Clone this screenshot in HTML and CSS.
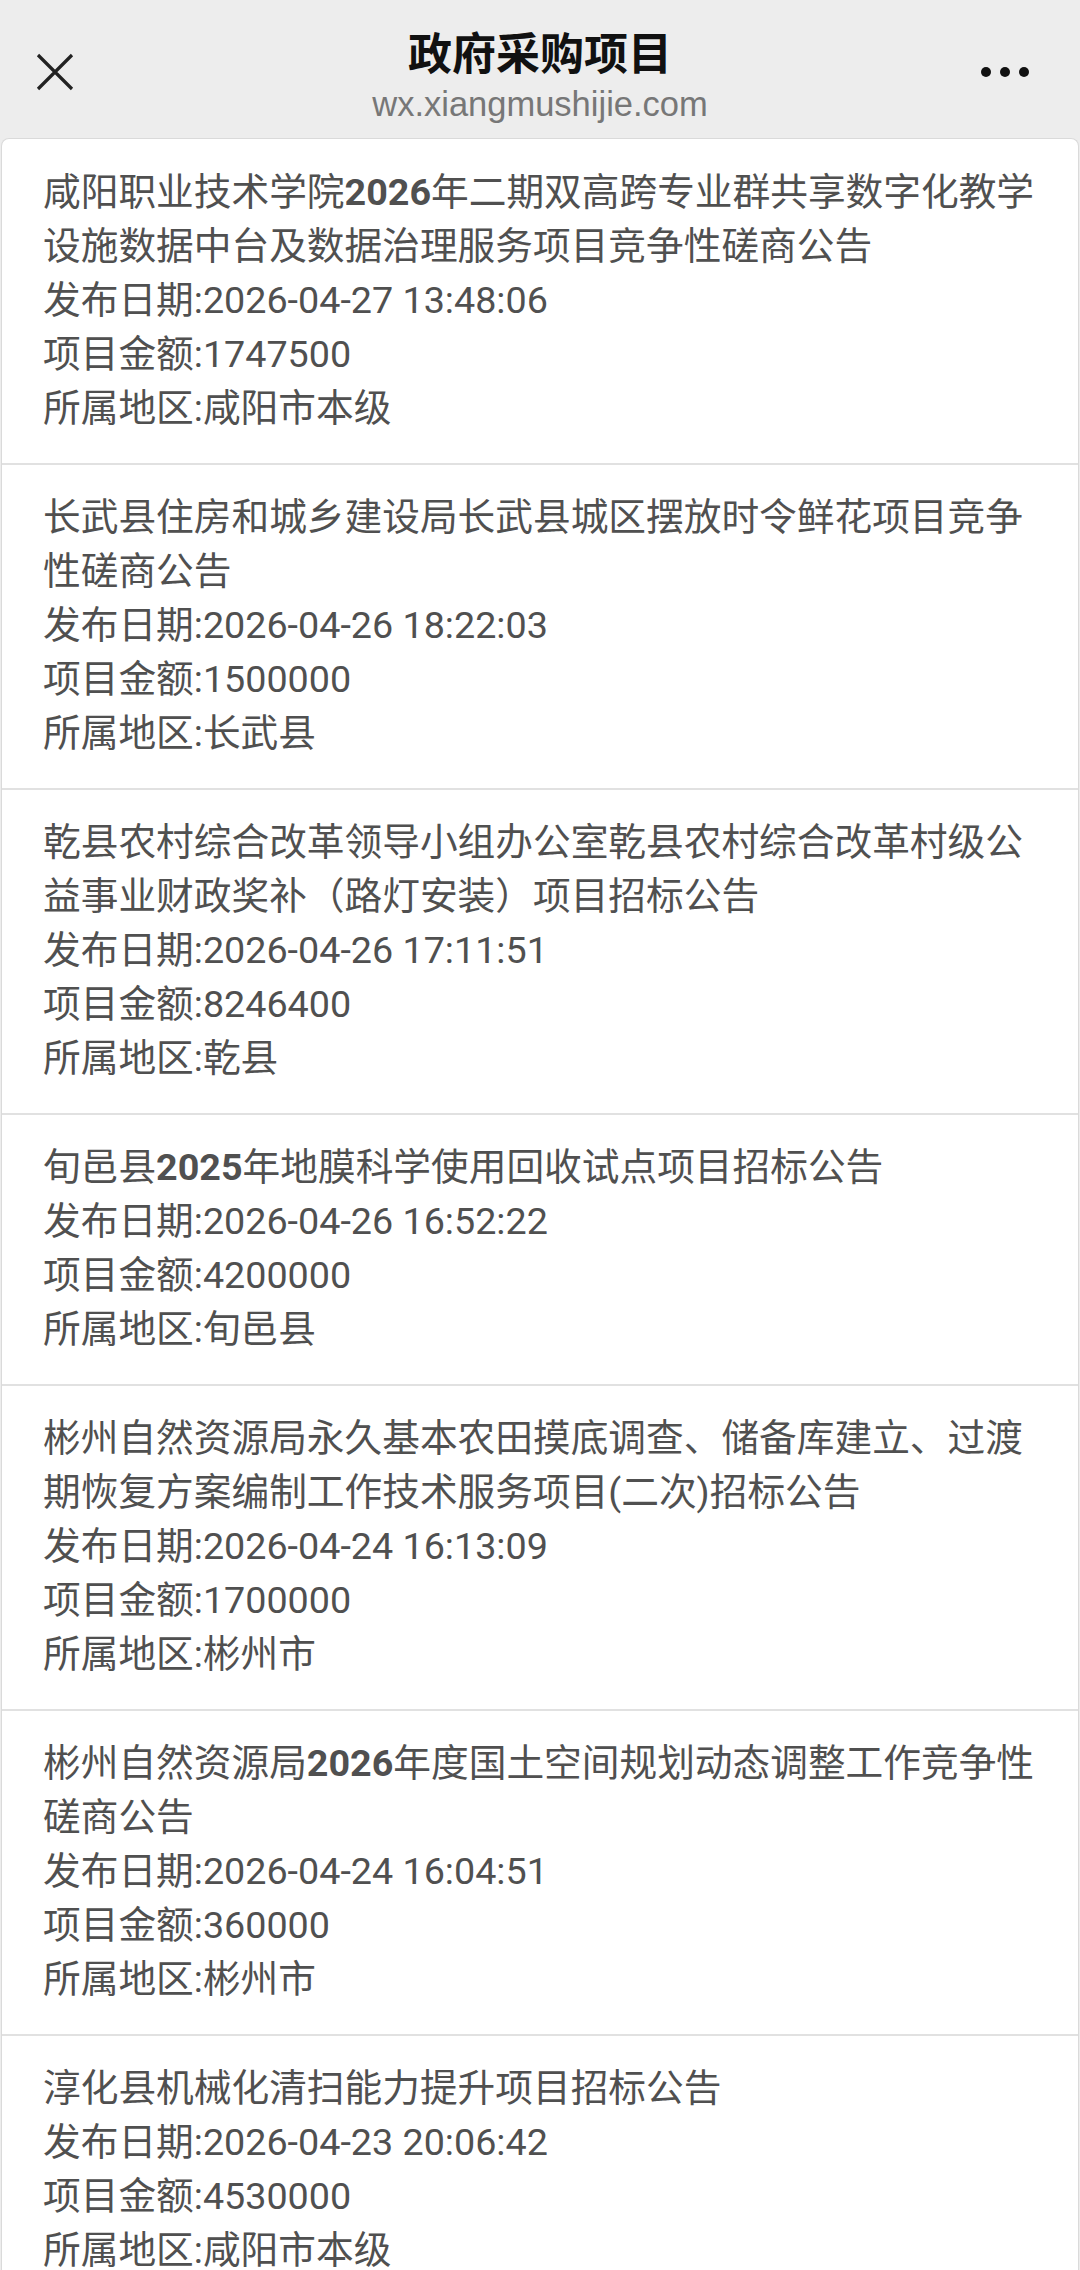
FILE: index.html
```html
<!DOCTYPE html>
<html>
<head>
<meta charset="utf-8"/>
<meta name="viewport" content="width=device-width, initial-scale=1.0" />
<title>政府采购项目</title>
<link rel="stylesheet" href="styles.css">
</head>
<body>

<div class="topbar">
  <div class="close">
    <svg width="38" height="38" viewBox="0 0 38 38">
      <path d="M2 2 L36 36 M36 2 L2 36" stroke="#222" stroke-width="3.2" fill="none"/>
    </svg>
  </div>
  <div class="heading">
    <div class="title">政府采购项目</div>
    <div class="host">wx.xiangmushijie.com</div>
  </div>
  <div class="more">
    <span class="dot"></span><span class="dot"></span><span class="dot"></span>
  </div>
</div>

<ul class="list">
  <li class="item">
    <p class="name">咸阳职业技术学院<b>2026</b>年二期双高跨专业群共享数字化教学设施数据中台及数据治理服务项目竞争性磋商公告</p>
    <p>发布日期:2026-04-27 13:48:06</p>
    <p>项目金额:1747500</p>
    <p>所属地区:咸阳市本级</p>
  </li>
  <li class="item">
    <p class="name">长武县住房和城乡建设局长武县城区摆放时令鲜花项目竞争性磋商公告</p>
    <p>发布日期:2026-04-26 18:22:03</p>
    <p>项目金额:1500000</p>
    <p>所属地区:长武县</p>
  </li>
  <li class="item">
    <p class="name">乾县农村综合改革领导小组办公室乾县农村综合改革村级公益事业财政奖补（路灯安装）项目招标公告</p>
    <p>发布日期:2026-04-26 17:11:51</p>
    <p>项目金额:8246400</p>
    <p>所属地区:乾县</p>
  </li>
  <li class="item">
    <p class="name">旬邑县<b>2025</b>年地膜科学使用回收试点项目招标公告</p>
    <p>发布日期:2026-04-26 16:52:22</p>
    <p>项目金额:4200000</p>
    <p>所属地区:旬邑县</p>
  </li>
  <li class="item">
    <p class="name">彬州自然资源局永久基本农田摸底调查、储备库建立、过渡期恢复方案编制工作技术服务项目(二次)招标公告</p>
    <p>发布日期:2026-04-24 16:13:09</p>
    <p>项目金额:1700000</p>
    <p>所属地区:彬州市</p>
  </li>
  <li class="item">
    <p class="name">彬州自然资源局<b>2026</b>年度国土空间规划动态调整工作竞争性磋商公告</p>
    <p>发布日期:2026-04-24 16:04:51</p>
    <p>项目金额:360000</p>
    <p>所属地区:彬州市</p>
  </li>
  <li class="item">
    <p class="name">淳化县机械化清扫能力提升项目招标公告</p>
    <p>发布日期:2026-04-23 20:06:42</p>
    <p>项目金额:4530000</p>
    <p>所属地区:咸阳市本级</p>
  </li>
</ul>

</body>
</html>
```

FILE: styles.css
```css
body {
  margin: 0;
  padding: 0;
  background: #ededed;
  font-family: Roboto, "Noto Sans CJK SC", sans-serif;
  color: #505050;
}

/* top bar of the in-app browser */
.topbar {
  display: grid;
  grid-template-columns: 110px 1fr 110px;
  height: 138px;
  background: #ededed;
}

.close {
  padding: 53px 0 0 36px;
}
.close svg {
  display: block;
}

.heading {
  text-align: center;
  padding-top: 24px;
}

.title {
  font-family: "Noto Sans CJK SC", sans-serif;
  font-size: 44px;
  font-weight: bold;
  line-height: 54px;
  color: #111;
}

.host {
  font-family: "Liberation Sans", sans-serif;
  font-size: 34.5px;
  line-height: 40px;
  margin-top: 6px;
  color: #777;
}

.more {
  display: flex;
  justify-content: flex-end;
  gap: 9px;
  padding: 67px 51px 0 0;
}
.dot {
  width: 10px;
  height: 10px;
  border-radius: 50%;
  background: #111;
}

/* result list */
.list {
  list-style: none;
  margin: 0 1px;
  padding: 0;
  background: #fff;
  border: 1px solid #dadada;
  border-bottom: none;
  border-radius: 8px 8px 0 0;
  min-height: 2200px;
}

.item {
  padding: 25px 29px 28px 41px;
  border-top: 2px solid #e1e1e1;
}
.item:first-child {
  border-top: none;
  padding-top: 26px;
}

.item p {
  margin: 0;
  font-size: 37.7px;
  line-height: 54px;
}

.item b {
  font-weight: bold;
}
```
